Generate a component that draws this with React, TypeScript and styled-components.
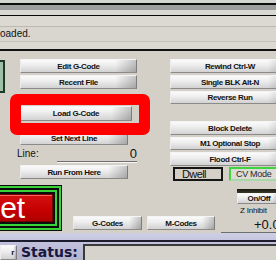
import React from 'react';
import styled, { createGlobalStyle } from 'styled-components';

const GlobalStyle = createGlobalStyle`
  html, body {
    margin: 0;
    padding: 0;
    background: #d4d0c8;
  }
  body {
    font-family: "Liberation Sans", Arial, sans-serif;
  }
`;

const Screen = styled.div`
  position: relative;
  width: 276px;
  height: 260px;
  overflow: hidden;
  background: #d4d0c8;
  display: flex;
  flex-direction: column;
`;

const Strip = styled.div<{ $h: number; $c: string }>`
  flex: none;
  height: ${p => p.$h}px;
  background: ${p => p.$c};
`;

const MessageArea = styled.div`
  flex: none;
  height: 33px;
  box-sizing: border-box;
  padding-top: 10px;
  background: #dcd9d3;
`;

const MessageBox = styled.div`
  height: 16px;
  box-sizing: border-box;
  border-top: 1px solid #bcb9b3;
  border-bottom: 1px solid #c4c1bb;
  background: #d9d6cf;
  color: #111;
  font-size: 10px;
  line-height: 14px;
  white-space: nowrap;
`;

const TopSection = styled.div`
  flex: none;
  height: 132px;
  display: flex;
`;

const Side = styled.div`
  flex: none;
  width: 20px;
  padding-top: 9px;
`;

const SideBox = styled.div`
  width: 5px;
  height: 33px;
  box-sizing: border-box;
  border: 2px solid #1e3a26;
  border-left: none;
  background: #9fbfa6;
`;

const Column = styled.div<{ $w: number }>`
  flex: none;
  width: ${p => p.$w}px;
  padding-top: 8px;
  display: flex;
  flex-direction: column;
`;

const Button = styled.div<{ $w?: number; $h?: number; $mt?: number }>`
  flex: none;
  width: ${p => (p.$w ? `${p.$w}px` : '100%')};
  height: ${p => p.$h || 14}px;
  margin-top: ${p => p.$mt || 0}px;
  box-sizing: border-box;
  border: 1px solid;
  border-color: #f4f4f4 #7c7c7c #8a8a8a #ededed;
  background:
    linear-gradient(to right, rgba(0, 0, 0, 0) 82%, rgba(0, 0, 0, 0.22) 100%),
    linear-gradient(to bottom, #fbfbfb 0%, #eeeeee 40%, #d2d2d2 100%);
  display: flex;
  align-items: center;
  justify-content: center;
  color: #111;
  font-size: 8px;
  font-weight: bold;
  letter-spacing: -0.35px;
  white-space: nowrap;
`;

const LineRow = styled.div`
  flex: none;
  height: 15px;
  margin: 2px 0 0 -3px;
  display: flex;
  align-items: flex-end;
`;

const LineLabel = styled.span`
  width: 40px;
  color: #111;
  font-size: 10px;
  line-height: 12px;
  padding-bottom: 2px;
`;

const Dro = styled.div<{ $w: number; $size: number }>`
  width: ${p => p.$w}px;
  box-sizing: border-box;
  border-bottom: 1px solid #6e6e6e;
  box-shadow: 0 1px 0 #f6f6f6;
  text-align: right;
  color: #111;
  font-size: ${p => p.$size}px;
  line-height: ${p => p.$size + 1}px;
  white-space: nowrap;
`;

const Gap = styled.div<{ $w: number }>`
  flex: none;
  width: ${p => p.$w}px;
`;

const ModeRow = styled.div`
  flex: none;
  height: 14px;
  margin-top: 1px;
  display: flex;
  gap: 6px;
  padding-left: 3px;
`;

const ModeBox = styled.div<{ $on?: boolean }>`
  width: ${p => (p.$on ? 60 : 50)}px;
  box-sizing: border-box;
  border: 2px solid;
  border-color: ${p => (p.$on ? '#3fd43f #a8d8a8 #a8d8a8 #3fd43f' : '#151515')};
  background: ${p => (p.$on ? '#dcdbd6' : '#d4d0c8')};
  color: ${p => (p.$on ? '#2a2a2a' : '#111')};
  font-size: ${p => (p.$on ? 9 : 11)}px;
  line-height: 10px;
  padding-left: ${p => (p.$on ? 5 : 7)}px;
  letter-spacing: ${p => (p.$on ? -0.3 : -0.6)}px;
  white-space: nowrap;
`;

const BottomSection = styled.div`
  flex: none;
  height: 50px;
  display: flex;
  align-items: flex-start;
`;

const ResetFrame = styled.div`
  flex: none;
  margin: 2px 0 0 -90px;
  padding: 9px;
`;

const ResetButton = styled.div`
  width: 134px;
  height: 28px;
  box-sizing: border-box;
  border: 1px solid #6a0000;
  background: linear-gradient(to bottom, #d41010 0%, #c40000 60%, #b00000 100%);
  box-shadow:
    inset 1px 1px 0 #ff6060,
    0 0 0 2px #0c0c0c,
    0 0 0 4px #36d436,
    0 0 0 6px #0c0c0c,
    0 0 0 8px #36d436,
    0 0 0 9px #0c0c0c;
  color: #fff;
  font-size: 30px;
  line-height: 26px;
  text-align: center;
`;

const CodeButtons = styled.div`
  flex: none;
  margin: 33px 0 0 11px;
  display: flex;
  gap: 5px;
`;

const MiniCol = styled.div`
  flex: none;
  width: 60px;
  margin: 6px 0 0 6px;
  display: flex;
  flex-direction: column;
`;

const LedBar = styled.div`
  height: 4px;
  margin-left: 16px;
  background: linear-gradient(to bottom, #16160e, #3a3a28);
`;

const SmallLabel = styled.div`
  margin: 2px 0 0 19px;
  height: 9px;
  color: #111;
  font-size: 8px;
  line-height: 9px;
  letter-spacing: -0.2px;
  white-space: nowrap;
`;

const StatusArea = styled.div`
  flex: none;
  height: 27px;
  display: flex;
  flex-direction: column;
  background: linear-gradient(to bottom, #cfcfe6 0%, #c0c0dc 40%, #b4b4cc 100%);
`;

const StatusRow = styled.div`
  flex: 1;
  display: flex;
  align-items: stretch;
  padding-top: 2px;
  border-top: 2px solid #1c1c2c;
  margin-top: 7px;
`;

const SmallButton = styled(Button)`
  width: 17px;
  height: 15px;
  margin-top: 1px;
  justify-content: flex-end;
  padding-right: 2px;
`;

const StatusLabel = styled.span`
  width: 62px;
  padding-left: 4px;
  color: #17173e;
  font-family: "DejaVu Sans", "Liberation Sans", sans-serif;
  font-size: 14px;
  font-weight: bold;
  line-height: 16px;
`;

const StatusField = styled.div`
  flex: 1;
  box-sizing: border-box;
  border-top: 2px solid #3a3a3a;
  border-left: 2px solid #3a3a3a;
  background: #d6d3cc;
`;

const Highlight = styled.div`
  position: absolute;
  left: 10px;
  top: 94px;
  width: 140px;
  height: 41px;
  box-sizing: border-box;
  border: 11px solid #fe0000;
  border-bottom-width: 12px;
  border-radius: 7px;
  pointer-events: none;
`;

export default function App() {
  return (
    <>
      <GlobalStyle />
      <Screen>
        <Strip $h={3} $c="#d2d6ce" />
        <Strip $h={2} $c="#0e0e0e" />
        <Strip $h={5} $c="#9e9e9e" />
        <Strip $h={5} $c="#dad8d2" />
        <Strip $h={1} $c="#080808" />
        <MessageArea>
          <MessageBox>oaded.</MessageBox>
        </MessageArea>
        <Strip $h={2} $c="#111111" />

        <TopSection>
          <Side>
            <SideBox />
          </Side>
          <Column $w={118}>
            <Button $w={117}>Edit G-Code</Button>
            <Button $w={117} $mt={2}>Recent File</Button>
            <Button $w={112} $h={15} $mt={17}>Load G-Code</Button>
            <Button $w={108} $mt={10}>Set Next Line</Button>
            <LineRow>
              <LineLabel>Line:</LineLabel>
              <Dro $w={80} $size={13}>0</Dro>
            </LineRow>
            <Button $w={108} $mt={3}>Run From Here</Button>
          </Column>
          <Gap $w={32} />
          <Column $w={120}>
            <Button>Rewind Ctrl-W</Button>
            <Button $mt={2}>Single BLK Alt-N</Button>
            <Button $h={13} $mt={2}>Reverse Run</Button>
            <Button $mt={17}>Block Delete</Button>
            <Button $h={13} $mt={2}>M1 Optional Stop</Button>
            <Button $mt={2}>Flood Ctrl-F</Button>
            <ModeRow>
              <ModeBox>Dwell</ModeBox>
              <ModeBox $on>CV Mode</ModeBox>
            </ModeRow>
          </Column>
        </TopSection>

        <BottomSection>
          <ResetFrame>
            <ResetButton>Reset</ResetButton>
          </ResetFrame>
          <CodeButtons>
            <Button $w={69}>G-Codes</Button>
            <Button $w={68}>M-Codes</Button>
          </CodeButtons>
          <MiniCol>
            <LedBar />
            <Button $h={11} style={{ marginLeft: 16, width: 'auto' }}>On/Off</Button>
            <SmallLabel>Z Inhibit</SmallLabel>
            <Dro $w={60} $size={13} style={{ marginTop: 3, textAlign: 'left', paddingLeft: 33 }}>+0.0000</Dro>
          </MiniCol>
        </BottomSection>

        <StatusArea>
          <StatusRow>
            <SmallButton>r</SmallButton>
            <StatusLabel>Status:</StatusLabel>
            <StatusField />
          </StatusRow>
        </StatusArea>

        <Highlight />
      </Screen>
    </>
  );
}
